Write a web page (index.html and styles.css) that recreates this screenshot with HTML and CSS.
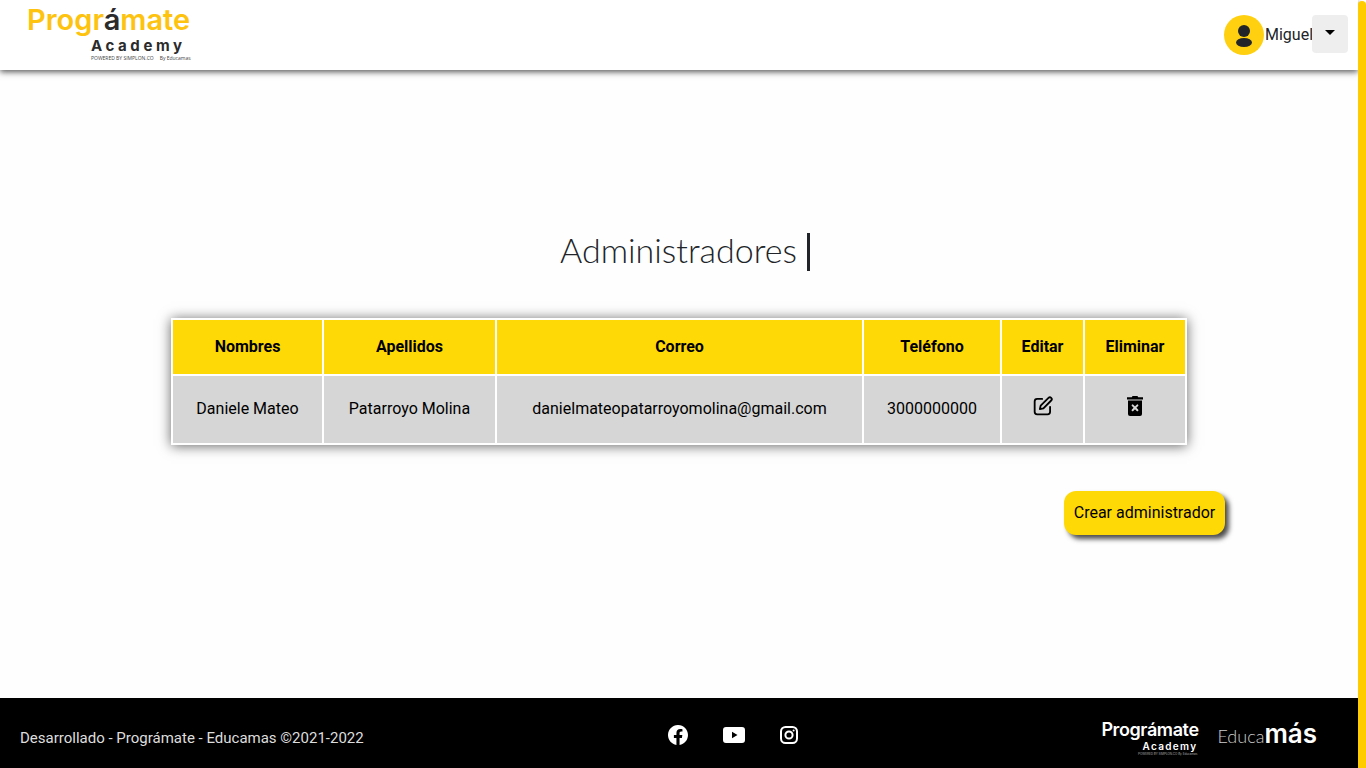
FILE: index.html
```html
<!DOCTYPE html>
<html lang="es">
<head>
    <meta charset="UTF-8">
    <meta name="viewport" content="width=device-width, initial-scale=1.0">
    <title>Administradores</title>
    <link rel="stylesheet" href="styles.css">
</head>
<body>
    <div class="page">
        <header class="top-bar">
            <div class="logo">
                <div class="logo-name">Progr<span class="logo-dark">á</span>mate</div>
                <div class="logo-academy">Academy</div>
                <div class="logo-small"><span>POWERED BY SIMPLON.CO</span><span>By Educamas</span></div>
            </div>
            <div class="user-menu">
                <span class="avatar">
                    <svg width="24" height="24" viewBox="0 0 24 24"><circle cx="12" cy="8" r="6" fill="#212529"/><ellipse cx="12" cy="19.5" rx="8" ry="4.5" fill="#212529"/></svg>
                </span>
                <span class="user-name">Miguel</span>
                <button class="dropdown-btn"><span class="caret"></span></button>
            </div>
        </header>

        <main class="content">
            <h1 class="title"><span class="title-text">Administradores</span></h1>

            <table class="admin-table">
                <thead>
                    <tr>
                        <th class="col-name">Nombres</th>
                        <th class="col-last">Apellidos</th>
                        <th class="col-mail">Correo</th>
                        <th class="col-phone">Teléfono</th>
                        <th class="col-edit">Editar</th>
                        <th class="col-del">Eliminar</th>
                    </tr>
                </thead>
                <tbody>
                    <tr>
                        <td>Daniele Mateo</td>
                        <td>Patarroyo Molina</td>
                        <td>danielmateopatarroyomolina@gmail.com</td>
                        <td>3000000000</td>
                        <td class="icon-cell">
                            <svg width="20" height="20" viewBox="0 0 24 24" fill="none" stroke="#000" stroke-width="2.2" stroke-linecap="round" stroke-linejoin="round"><path d="M11 3.5H5a3 3 0 0 0-3 3V19a3 3 0 0 0 3 3h12.5a3 3 0 0 0 3-3v-6"/><path d="M18.6 2.2a2.2 2.2 0 0 1 3.2 3.2L12.5 14.8l-4.3 1 1-4.3z"/></svg>
                        </td>
                        <td class="icon-cell">
                            <svg width="16" height="20" viewBox="0 0 16 20"><path d="M5.5 0h5l.7 1.3H16v2.2H0V1.3h4.8z" fill="#000"/><path d="M1 4.6h14V18a2 2 0 0 1-2 2H3a2 2 0 0 1-2-2z" fill="#000"/><path d="M5.6 9.4l4.8 4.8M10.4 9.4l-4.8 4.8" stroke="#d6d6d6" stroke-width="2" stroke-linecap="round"/></svg>
                        </td>
                    </tr>
                </tbody>
            </table>

            <div class="actions">
                <button class="create-btn">Crear administrador</button>
            </div>
        </main>

        <footer class="footer">
            <p class="copy">Desarrollado - Prográmate - Educamas ©2021-2022</p>
            <div class="social">
                <svg width="20" height="20" viewBox="0 0 16 16" fill="#fff"><path d="M16 8.049c0-4.446-3.582-8.05-8-8.05C3.58 0-.002 3.603-.002 8.05c0 4.017 2.926 7.347 6.75 7.951v-5.625h-2.03V8.05H6.75V6.275c0-2.017 1.195-3.131 3.022-3.131.876 0 1.791.157 1.791.157v1.98h-1.009c-.993 0-1.303.621-1.303 1.258v1.51h2.218l-.354 2.326H9.25V16c3.824-.604 6.75-3.934 6.75-7.951z"/></svg>
                <svg width="22" height="16" viewBox="0 0 22 16" fill="#fff"><path fill-rule="evenodd" d="M3 0h16a3 3 0 0 1 3 3v10a3 3 0 0 1-3 3H3a3 3 0 0 1-3-3V3a3 3 0 0 1 3-3zm6 4.8v6.4L14.5 8z"/></svg>
                <svg width="18" height="18" viewBox="0 0 18 18" fill="none" stroke="#fff" stroke-width="2"><rect x="1" y="1" width="16" height="16" rx="4.5"/><circle cx="9" cy="9" r="3.6"/><circle cx="13.6" cy="4.4" r="1" fill="#fff" stroke="none"/></svg>
            </div>
            <div class="partners">
                <div class="mini-logo">
                    <div class="mini-name">Prográmate</div>
                    <div class="mini-academy">Academy</div>
                    <div class="mini-small">POWERED BY SIMPLON.CO By Educamas</div>
                </div>
                <div class="educa">Educa<b>más</b></div>
            </div>
        </footer>
    </div>
    <div class="scroll-thumb"></div>
</body>
</html>
```

FILE: styles.css
```css
* {
    box-sizing: border-box;
}

body {
    margin: 0;
    height: 768px;
    display: flex;
    overflow: hidden;
    background-color: #fff;
    color: #212529;
    font-family: Roboto, sans-serif;
    font-size: 16px;
    line-height: 1.5;
}

.page {
    flex: 1;
    display: flex;
    flex-direction: column;
    min-width: 0;
    background-color: #fefefe;
}

.scroll-thumb {
    width: 8px;
    margin-top: 1px;
    background-color: #ffcc00;
    border-radius: 4px 4px 0 0;
}

/* top bar */
.top-bar {
    height: 70px;
    flex: none;
    display: flex;
    justify-content: space-between;
    align-items: center;
    padding: 0 10px 0 27px;
    background-color: #fff;
    box-shadow: 0 2px 6px rgba(0, 0, 0, 0.65);
}

.logo {
    width: 164px;
    align-self: flex-start;
    padding-top: 3px;
    font-family: Inter, sans-serif;
    font-weight: 700;
}

.logo-name {
    color: #fdc30f;
    font-size: 29px;
    font-weight: 600;
    line-height: 33px;
    white-space: nowrap;
}

.logo-dark {
    color: #2b2b2b;
}

.logo-academy {
    margin-top: 2px;
    color: #2b2b2b;
    font-size: 15px;
    line-height: 15px;
    letter-spacing: 3.6px;
    padding-left: 64px;
    white-space: nowrap;
}

.logo-small {
    display: flex;
    gap: 6px;
    padding: 2px 0 0 64px;
    color: #444;
    font-family: "Open Sans", sans-serif;
    font-size: 5px;
    font-weight: 400;
    line-height: 7px;
    white-space: nowrap;
}

.user-menu {
    display: flex;
    align-items: center;
}

.avatar {
    width: 40px;
    height: 40px;
    margin-right: 1px;
    border-radius: 50%;
    background-color: #ffd00f;
    display: flex;
    align-items: center;
    justify-content: center;
}

.user-name {
    width: 47px;
}

.dropdown-btn {
    width: 36px;
    height: 38px;
    padding: 0;
    border: none;
    border-radius: 4px;
    background-color: #eeeeee;
    display: flex;
    align-items: center;
    justify-content: center;
    margin-bottom: 2px;
}

.caret {
    width: 0;
    height: 0;
    margin-bottom: 4px;
    border-top: 5px solid #000;
    border-left: 5px solid transparent;
    border-right: 5px solid transparent;
}

/* content */
.content {
    flex: 1;
    display: flex;
    flex-direction: column;
    align-items: center;
    padding-top: 163px;
}

.title {
    margin: 0 0 47px 12px;
    font-family: Lato, sans-serif;
    font-size: 34px;
    font-weight: 300;
    line-height: 34px;
    color: #212529;
}

.title-text {
    display: inline-block;
    padding: 0 10px 4px 0;
    border-right: 3px solid #212529;
}

.admin-table {
    width: 1014px;
    table-layout: fixed;
    border-collapse: collapse;
    border: 2px solid #fff;
    box-shadow: 0 1px 12px rgba(0, 0, 0, 0.6);
    color: #000;
    text-align: center;
}

.admin-table th,
.admin-table td {
    border: 2px solid #fff;
    padding: 0 4px;
}

.admin-table th {
    height: 56px;
    background-color: #ffd906;
    font-weight: 700;
}

.admin-table td {
    padding-top: 21px;
    padding-bottom: 22px;
    background-color: #d6d6d6;
}

.admin-table .icon-cell {
    padding-top: 20px;
    padding-bottom: 23px;
    line-height: 0;
    vertical-align: top;
}

.col-name { width: 151px; }
.col-last { width: 173px; }
.col-mail { width: 367px; }
.col-phone { width: 138px; }
.col-edit { width: 83px; }
.col-del { width: 102px; }

.actions {
    align-self: stretch;
    display: flex;
    justify-content: flex-end;
    margin-top: 46px;
    padding-right: 133px;
}

.create-btn {
    width: 161px;
    height: 44px;
    padding: 0 0 2px;
    border: none;
    border-radius: 12px;
    background-color: #ffd906;
    color: #000;
    font-family: Roboto, sans-serif;
    font-size: 16px;
    box-shadow: 4px 4px 5px rgba(0, 0, 0, 0.7);
}

/* footer */
.footer {
    height: 70px;
    flex: none;
    display: flex;
    align-items: center;
    padding: 0 41px 0 20px;
    background-color: #000;
    color: #ddd;
    font-size: 15px;
}

.copy {
    width: 648px;
    margin: 10px 0 0;
}

.social {
    display: flex;
    align-items: center;
    gap: 35px;
    margin-top: 3px;
}

.partners {
    margin-left: auto;
    display: flex;
    align-items: center;
    gap: 19px;
    color: #fff;
}

.mini-logo {
    width: 97px;
    margin-top: 10px;
    font-family: Inter, sans-serif;
    font-weight: 600;
    white-space: nowrap;
}

.mini-name {
    font-size: 18px;
    line-height: 19px;
    letter-spacing: -0.4px;
}

.mini-academy {
    margin-top: 1px;
    font-size: 10px;
    line-height: 12px;
    letter-spacing: 1.3px;
    text-align: right;
    padding-right: 1px;
}

.mini-small {
    font-size: 3px;
    font-weight: 400;
    line-height: 5px;
    text-align: right;
    padding-right: 1px;
    color: #aaa;
}

.educa {
    margin-top: 4px;
    font-family: Lato, sans-serif;
    font-size: 18px;
    font-weight: 300;
    line-height: 22px;
    color: #ccc;
    white-space: nowrap;
}

.educa b {
    color: #fff;
    font-family: Inter, sans-serif;
    font-size: 26px;
    font-weight: 600;
    line-height: 22px;
}
```
